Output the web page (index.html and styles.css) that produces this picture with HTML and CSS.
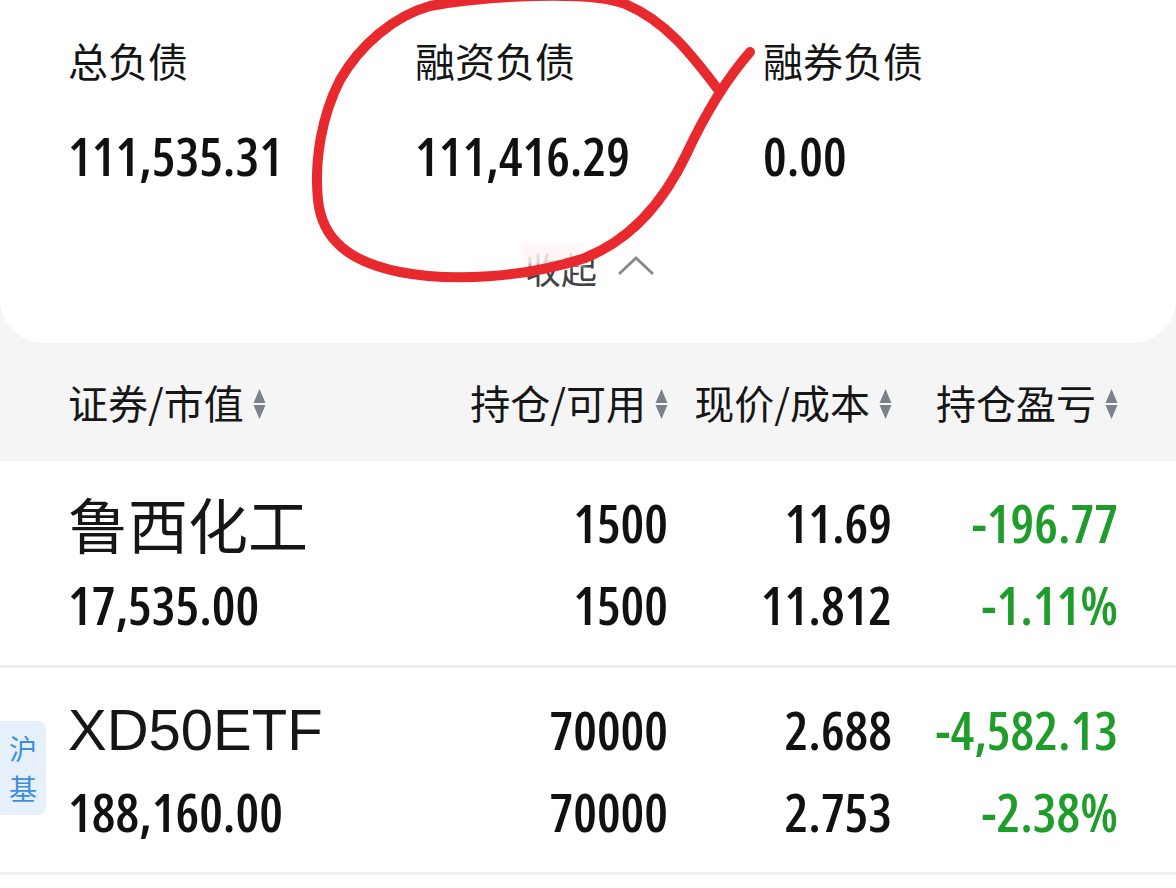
FILE: index.html
```html
<!DOCTYPE html>
<html lang="zh-CN">
<head>
    <meta charset="UTF-8">
    <meta name="viewport" content="width=device-width, initial-scale=1.0">
    <title>持仓</title>
    <link rel="stylesheet" href="styles.css">
</head>
<body>
    <div id="page">
        <section id="summary">
            <div id="debts">
                <div class="debt">
                    <div class="debt-label">总负债</div>
                    <div class="debt-value">111,535.31</div>
                </div>
                <div class="debt">
                    <div class="debt-label">融资负债</div>
                    <div class="debt-value">111,416.29</div>
                </div>
                <div class="debt">
                    <div class="debt-label">融券负债</div>
                    <div class="debt-value">0.00</div>
                </div>
            </div>
            <div id="collapse">
                <span class="collapse-text">收起</span>
                <svg class="chevron" width="40" height="22" viewBox="0 0 40 22">
                    <polyline points="2,20 19,4 36,20" fill="none" stroke="#8a8a8a" stroke-width="3"/>
                </svg>
                <span class="mosaic"></span>
            </div>
        </section>

        <div id="table-head">
            <div class="th th-name">证券/市值<svg class="sort" width="13" height="32" viewBox="0 0 13 32"><polygon points="0.5,15 6.5,1 12.5,15" fill="#7d818a"/><polygon points="0.5,17 12.5,17 6.5,31" fill="#7d818a"/></svg></div>
            <div class="th">持仓/可用<svg class="sort" width="13" height="32" viewBox="0 0 13 32"><polygon points="0.5,15 6.5,1 12.5,15" fill="#7d818a"/><polygon points="0.5,17 12.5,17 6.5,31" fill="#7d818a"/></svg></div>
            <div class="th">现价/成本<svg class="sort" width="13" height="32" viewBox="0 0 13 32"><polygon points="0.5,15 6.5,1 12.5,15" fill="#7d818a"/><polygon points="0.5,17 12.5,17 6.5,31" fill="#7d818a"/></svg></div>
            <div class="th">持仓盈亏<svg class="sort" width="13" height="32" viewBox="0 0 13 32"><polygon points="0.5,15 6.5,1 12.5,15" fill="#7d818a"/><polygon points="0.5,17 12.5,17 6.5,31" fill="#7d818a"/></svg></div>
        </div>

        <div class="stock-row">
            <div class="cell cell-name">
                <div class="stock-name">鲁西化工</div>
                <div class="num">17,535.00</div>
            </div>
            <div class="cell">
                <div class="num">1500</div>
                <div class="num">1500</div>
            </div>
            <div class="cell">
                <div class="num">11.69</div>
                <div class="num">11.812</div>
            </div>
            <div class="cell loss">
                <div class="num">-196.77</div>
                <div class="num">-1.11%</div>
            </div>
        </div>

        <div class="stock-row">
            <span class="market-tag">沪<br>基</span>
            <div class="cell cell-name">
                <div class="stock-name stock-code">XD50ETF</div>
                <div class="num">188,160.00</div>
            </div>
            <div class="cell">
                <div class="num">70000</div>
                <div class="num">70000</div>
            </div>
            <div class="cell">
                <div class="num">2.688</div>
                <div class="num">2.753</div>
            </div>
            <div class="cell loss">
                <div class="num">-4,582.13</div>
                <div class="num">-2.38%</div>
            </div>
        </div>

        <!-- hand-drawn red circle on top of the screenshot -->
        <svg id="scribble" width="1176" height="888" viewBox="0 0 1176 888">
            <path d="M720,92 C694,58 668,22 625,4 C590,-10 482,-4 430,6 C394,16 360,45 340,80 C322,115 314,160 318,200 C322,240 350,262 400,272 C450,282 525,278 585,258 C630,240 662,205 686,155 C706,112 730,75 750,52"
                  fill="none" stroke="#e8292d" stroke-width="10" stroke-linecap="round" stroke-linejoin="round"/>
        </svg>
    </div>
</body>
</html>
```

FILE: styles.css
```css
body {
    margin: 0;
    background-color: #ffffff;
    color: #111111;
    font-family: "Noto Sans CJK SC", "Noto Sans", sans-serif;
}
#page {
    position: relative;
    width: 1176px;
    height: 888px;
    overflow: hidden;
    background-color: #ffffff;
}
#summary {
    background-color: #f5f5f6;
}
#debts {
    display: grid;
    grid-template-columns: 347px 348px 1fr;
    padding: 36px 0 0 68px;
    background-color: #ffffff;
}
.debt-label {
    font-size: 40px;
    line-height: 48px;
    color: #151515;
}
.debt-value {
    margin-top: 42px;
    font-family: "Open Sans", sans-serif;
    font-stretch: 75%;
    font-weight: 600;
    font-size: 53px;
    line-height: 60px;
    color: #111111;
}
#collapse {
    position: relative;
    display: flex;
    justify-content: center;
    align-items: center;
    gap: 20px;
    height: 48px;
    padding: 58px 0 51px 0;
    background-color: #ffffff;
    border-radius: 0 0 44px 44px;
}
.collapse-text {
    font-size: 36px;
    line-height: 48px;
    color: #444444;
    margin-left: 6px;
}
.chevron {
    margin-top: -6px;
}
.mosaic {
    position: absolute;
    left: 521px;
    top: 56px;
    width: 64px;
    height: 24px;
    background-color: rgba(255, 244, 246, 0.85);
    filter: blur(2px);
}
#table-head {
    display: grid;
    grid-template-columns: 1fr 200px 224px 226px;
    align-items: center;
    height: 118px;
    padding: 0 58px 0 68px;
    background-color: #f5f5f6;
}
.th {
    display: flex;
    justify-content: flex-end;
    align-items: center;
    gap: 9px;
    font-size: 40px;
    line-height: 48px;
    color: #161616;
    white-space: nowrap;
}
.th-name {
    justify-content: flex-start;
}
.sort {
    margin-top: 4px;
}
.stock-row {
    position: relative;
    display: grid;
    grid-template-columns: 1fr 200px 224px 226px;
    padding: 21px 58px 19px 68px;
    border-bottom: 3px solid #efefef;
}
.cell {
    text-align: right;
}
.cell-name {
    text-align: left;
}
.num {
    font-family: "Open Sans", sans-serif;
    font-stretch: 77%;
    font-weight: 600;
    font-size: 53px;
    line-height: 82px;
    color: #111111;
    white-space: nowrap;
}
.stock-name {
    font-size: 60px;
    line-height: 82px;
    color: #161616;
}
.stock-code {
    font-family: "Liberation Sans", sans-serif;
    font-size: 58px;
}
.loss .num {
    color: #1f9d2b;
}
.market-tag {
    position: absolute;
    left: 0;
    top: 53px;
    width: 46px;
    padding: 7px 0;
    box-sizing: border-box;
    background-color: #e5f0fb;
    border-radius: 0 8px 8px 0;
    color: #3d8fdb;
    font-size: 28px;
    line-height: 40px;
    text-align: center;
}
#scribble {
    position: absolute;
    left: 0;
    top: 0;
    pointer-events: none;
}
```
